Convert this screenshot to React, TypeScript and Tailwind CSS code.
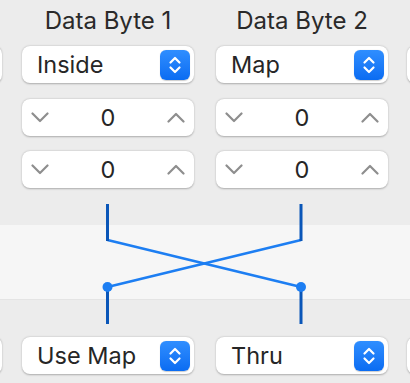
import React from 'react';

const font = "font-['Inter','Noto_Sans',sans-serif]";

const UpDown: React.FC = () => (
  <div className="w-[30px] h-[30px] rounded-[6px] bg-gradient-to-b from-[#2f8eff] to-[#0a6cf2] flex items-center justify-center shadow-[0_0.5px_1px_rgba(0,0,0,0.2)]">
    <svg width="14" height="20" viewBox="0 0 14 20" fill="none">
      <path d="M2.5 7.5 L7 3 L11.5 7.5" stroke="white" strokeWidth="2.2" strokeLinecap="round" strokeLinejoin="round" />
      <path d="M2.5 12.5 L7 17 L11.5 12.5" stroke="white" strokeWidth="2.2" strokeLinecap="round" strokeLinejoin="round" />
    </svg>
  </div>
);

const Popup: React.FC<{ label: string }> = ({ label }) => (
  <div className="w-[172px] h-[37px] shrink-0 bg-white rounded-[8px] shadow-[0_0.5px_2px_rgba(0,0,0,0.28)] flex items-center justify-between pl-[15px] pr-[4px]">
    <span className="text-[23.5px] leading-none text-[#262626]">{label}</span>
    <UpDown />
  </div>
);

const Chevron: React.FC<{ up?: boolean }> = ({ up }) => (
  <svg width="18" height="11" viewBox="0 0 18 11" fill="none">
    <path
      d={up ? 'M1.5 9.5 L9 2 L16.5 9.5' : 'M1.5 1.5 L9 9 L16.5 1.5'}
      stroke="#8e8e8e"
      strokeWidth="2.2"
      strokeLinecap="round"
      strokeLinejoin="round"
    />
  </svg>
);

const Stepper: React.FC<{ value: number }> = ({ value }) => (
  <div className="w-[172px] h-[37px] bg-white rounded-[8px] shadow-[0_0.5px_2px_rgba(0,0,0,0.28)] flex items-center justify-between px-[9px]">
    <Chevron />
    <span className="text-[23.5px] leading-none text-[#262626]">{value}</span>
    <Chevron up />
  </div>
);

const Sliver: React.FC = () => (
  <div className="w-[22px] h-[37px] shrink-0 bg-white rounded-[8px] shadow-[0_0.5px_2px_rgba(0,0,0,0.28)]" />
);

const PopupRow: React.FC<{ a: string; b: string }> = ({ a, b }) => (
  <div className="flex items-center">
    <div className="-ml-[20px] mr-[20px]">
      <Sliver />
    </div>
    <Popup label={a} />
    <div className="ml-[22px]">
      <Popup label={b} />
    </div>
    <div className="ml-[19px]">
      <Sliver />
    </div>
  </div>
);

export default function App() {
  return (
    <div className={`w-[410px] h-[383px] bg-[#ececec] overflow-hidden ${font}`}>
      {/* headers */}
      <div className="h-[46px] pt-[7px] flex pl-[22px] gap-[22px]">
        <div className="w-[172px] text-center text-[24px] leading-[28px] text-[#2a2a2a]">Data Byte 1</div>
        <div className="w-[172px] text-center text-[24px] leading-[28px] text-[#2a2a2a]">Data Byte 2</div>
      </div>

      <PopupRow a="Inside" b="Map" />

      <div className="flex flex-col gap-[15px] mt-[16px] pl-[22px]">
        <div className="flex gap-[22px]">
          <Stepper value={0} />
          <Stepper value={0} />
        </div>
        <div className="flex gap-[22px]">
          <Stepper value={0} />
          <Stepper value={0} />
        </div>
      </div>

      {/* routing diagram */}
      <div className="relative h-[149px] pt-[37px]">
        <div className="h-[75px] bg-[#f6f6f6] border-b border-[#e4e4e4]" />
        <svg className="absolute inset-0" width="410" height="149" viewBox="0 0 410 149">
          <line x1="301" y1="52" x2="107.5" y2="99" stroke="#1d7ef2" strokeWidth="2.6" />
          <line x1="107.5" y1="52" x2="301" y2="99" stroke="#1d7ef2" strokeWidth="2.6" />
          <line x1="107.5" y1="16" x2="107.5" y2="53" stroke="#0a56b8" strokeWidth="3" />
          <line x1="301" y1="16" x2="301" y2="53" stroke="#0a56b8" strokeWidth="3" />
          <line x1="107.5" y1="99" x2="107.5" y2="136" stroke="#0a56b8" strokeWidth="3" />
          <line x1="301" y1="99" x2="301" y2="136" stroke="#0a56b8" strokeWidth="3" />
          <circle cx="107.5" cy="99" r="5" fill="#1d7ef2" />
          <circle cx="301" cy="99" r="5" fill="#1d7ef2" />
        </svg>
      </div>

      <PopupRow a="Use Map" b="Thru" />
    </div>
  );
}
